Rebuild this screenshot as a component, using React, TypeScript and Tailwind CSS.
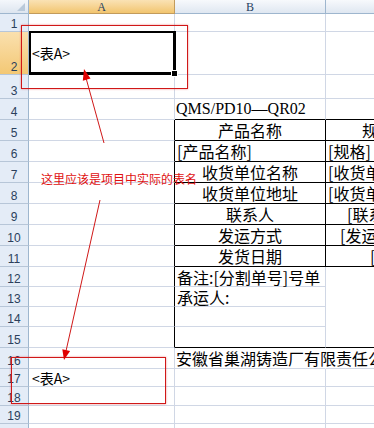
import type { ReactNode } from 'react';

type Row = {
  n: number;
  h: number;
  a?: ReactNode;
  b?: ReactNode;
  c?: ReactNode;
  aB?: string;
  bB?: string;
  cB?: string;
};

const tbl = 'border-r-black';
const mid = { aB: tbl, bB: 'border-r-black border-b-black', cB: 'border-b-black' };
const note = { aB: tbl, cB: 'border-b-white' };

const Txt = ({ children, className = '' }: { children: ReactNode; className?: string }) => (
  <span className={`whitespace-nowrap text-[16px] leading-none text-black ${className}`}>{children}</span>
);

const rows: Row[] = [
  { n: 1, h: 18 },
  { n: 2, h: 43, a: <span className="pl-[3px] text-[14px] leading-none">&lt;表A&gt;</span> },
  { n: 3, h: 24 },
  {
    n: 4,
    h: 21,
    b: <Txt className="pl-[1px] font-['Liberation_Serif',serif]">QMS/PD10—QR02</Txt>,
    bB: 'border-b-black',
    cB: 'border-b-black',
  },
  { n: 5, h: 21, ...mid, b: <Txt className="w-full text-center">产品名称</Txt>, c: <Txt className="pl-[36px]">规格</Txt> },
  { n: 6, h: 21, ...mid, b: <Txt className="pl-[2px]">[产品名称]</Txt>, c: <Txt className="pl-[2px]">[规格]</Txt> },
  { n: 7, h: 21, ...mid, b: <Txt className="w-full text-center">收货单位名称</Txt>, c: <Txt className="pl-[2px]">[收货单位名称]</Txt> },
  { n: 8, h: 21, ...mid, b: <Txt className="w-full text-center">收货单位地址</Txt>, c: <Txt className="pl-[2px]">[收货单位地址]</Txt> },
  { n: 9, h: 21, ...mid, b: <Txt className="w-full text-center">联系人</Txt>, c: <Txt className="pl-[21px]">[联系人]</Txt> },
  { n: 10, h: 21, ...mid, b: <Txt className="w-full text-center">发运方式</Txt>, c: <Txt className="pl-[14px]">[发运方式]</Txt> },
  { n: 11, h: 21, ...mid, b: <Txt className="w-full text-center">发货日期</Txt>, c: <Txt className="pl-[44px]">[发货日期]</Txt> },
  { n: 12, h: 20, ...note, b: <Txt className="pl-[2px]">备注:[分割单号]号单</Txt> },
  { n: 13, h: 20, ...note, b: <Txt className="pl-[2px]">承运人:</Txt> },
  { n: 14, h: 20, ...note },
  { n: 15, h: 21, aB: tbl, bB: 'border-b-black', cB: 'border-b-black' },
  { n: 16, h: 21, bB: 'border-r-white', b: <Txt className="pl-[1px]">安徽省巢湖铸造厂有限责任公司</Txt> },
  { n: 17, h: 18, a: <span className="pl-[3px] text-[14px] leading-none">&lt;表A&gt;</span> },
  { n: 18, h: 19 },
  { n: 19, h: 18 },
  { n: 20, h: 18 },
];

const cell = 'box-border flex shrink-0 items-center border-b border-r border-[#d0d7e5]';
const colHead =
  "flex h-[14px] shrink-0 items-center justify-center border-b font-['Liberation_Serif',serif] text-[12px] leading-none text-[#27415f]";

export default function App() {
  return (
    <div className="relative h-[428px] w-[374px] overflow-hidden bg-white font-['Noto_Sans_CJK_SC',sans-serif] text-black">
      <div className="flex h-[14px] w-[600px]">
        <div className="h-[14px] w-[29px] shrink-0 border-b border-r border-[#9eb6ce] bg-gradient-to-b from-[#f4f7fb] to-[#dde5ef]">
          <svg width="28" height="13">
            <polygon points="25,3 25,11 17,11" fill="#b9c9da" />
          </svg>
        </div>
        <div className={`${colHead} w-[146px] border-r border-[#c29b5c] bg-gradient-to-b from-[#fae2b4] to-[#f2c56e]`}>A</div>
        <div className={`${colHead} w-[151px] border-r border-[#9eb6ce] bg-gradient-to-b from-[#f7f9fc] to-[#dfe7f1]`}>B</div>
        <div className={`${colHead} w-[200px] border-[#9eb6ce] bg-gradient-to-b from-[#f7f9fc] to-[#dfe7f1]`}>C</div>
      </div>

      {rows.map((r) => (
        <div key={r.n} className="flex w-[600px]" style={{ height: r.h }}>
          <div
            className={`box-border flex w-[29px] shrink-0 items-end justify-center border-b border-r border-b-[#b7c6d8] border-r-[#9eb6ce] pb-[1px] font-['Liberation_Sans',sans-serif] text-[12px] leading-none text-[#2b3f5c] ${
              r.n === 2 ? 'bg-gradient-to-b from-[#fae0ae] to-[#f3c874]' : 'bg-[#e4ecf7]'
            }`}
          >
            {r.n}
          </div>
          <div className={`${cell} w-[146px] ${r.aB ?? ''}`}>{r.a}</div>
          <div className={`${cell} w-[151px] ${r.bB ?? ''}`}>{r.b}</div>
          <div className={`${cell} w-[200px] overflow-hidden ${r.cB ?? ''}`}>{r.c}</div>
        </div>
      ))}

      {/* selected cell A2 */}
      <div className="absolute left-[29px] top-[31px] h-[44px] w-[147px] border-b-[3px] border-l-2 border-r-[3px] border-t-2 border-black" />
      <div className="absolute left-[171px] top-[70px] h-[7px] w-[7px] border border-white bg-black" />

      {/* annotations */}
      <div className="absolute left-[21px] top-[25px] h-[64px] w-[167px] border border-[#d01818] shadow-[0_0_2px_rgba(220,0,0,0.45)]" />
      <div className="absolute left-[11px] top-[357px] h-[47px] w-[155px] border border-[#d01818] shadow-[0_0_2px_rgba(220,0,0,0.45)]" />
      <div className="absolute left-[41px] top-[171px] whitespace-nowrap text-[12px] leading-[16px] text-[#e01010]">
        这里应该是项目中实际的表名
      </div>
      <svg className="pointer-events-none absolute left-0 top-0" width="374" height="428">
        <line x1="104" y1="143" x2="86" y2="78" stroke="#d01818" strokeWidth="1" />
        <polygon points="84,69 90.5,78.6 82.8,80.7" fill="#e00000" />
        <line x1="100" y1="200" x2="66" y2="351" stroke="#d01818" strokeWidth="1" />
        <polygon points="64,360 70.1,351.1 62.3,349.3" fill="#e00000" />
      </svg>
    </div>
  );
}
